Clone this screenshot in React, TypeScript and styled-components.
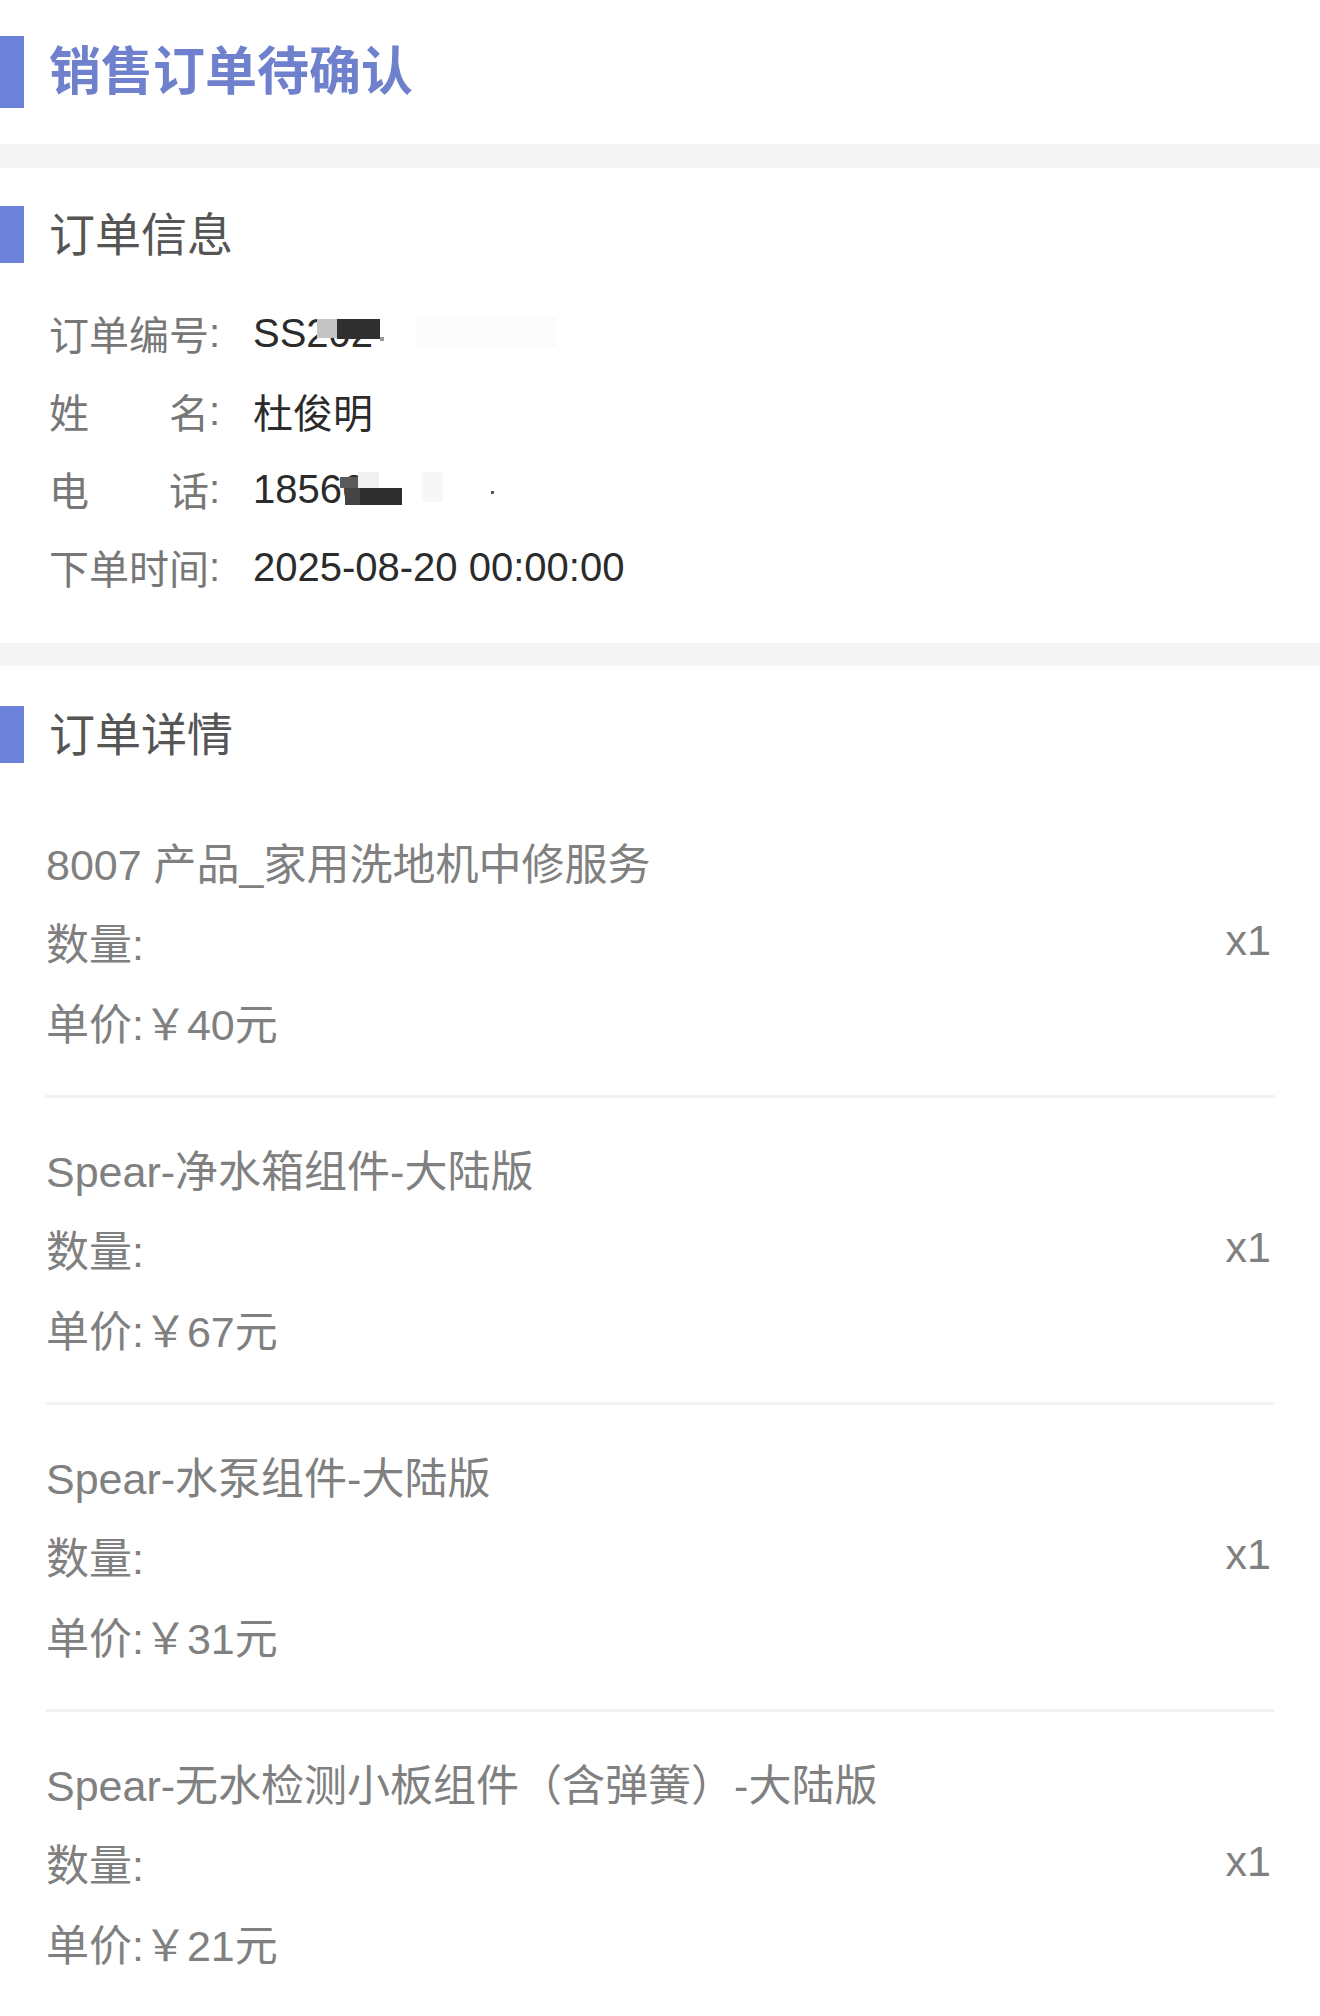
import React from "react";
import styled, { createGlobalStyle } from "styled-components";

const GlobalStyle = createGlobalStyle`
  html, body {
    margin: 0;
    padding: 0;
    background: #ffffff;
  }
  body {
    font-family: "Liberation Sans", Arial, "Noto Sans CJK SC", sans-serif;
  }
`;

interface OrderItem {
  name: string,
  qty: number,
  price: number
}

const items: OrderItem[] = [
  { name: "8007 产品_家用洗地机中修服务", qty: 1, price: 40 },
  { name: "Spear-净水箱组件-大陆版", qty: 1, price: 67 },
  { name: "Spear-水泵组件-大陆版", qty: 1, price: 31 },
  { name: "Spear-无水检测小板组件（含弹簧）-大陆版", qty: 1, price: 21 },
];

const App = () => {
  return (
    <Page>
      <GlobalStyle />
      <TopHeader>
        <Bar $height={72} />
        <PageTitle>销售订单待确认</PageTitle>
      </TopHeader>
      <Gap $height={24} />

      <InfoSection>
        <SectionHeader $mb={31}>
          <Bar $height={57} />
          <SectionTitle>订单信息</SectionTitle>
        </SectionHeader>
        <InfoRow>
          <Label>订单编号</Label><Colon>:</Colon>
          <Value>
            SS
            <Masked>
              202
              {/* privacy mosaic over the order number */}
              <MaskBlock $x={11} $y={8} $w={20} $h={19} $c="#c4c4c4" />
              <MaskBlock $x={31} $y={8} $w={43} $h={20} $c="#2f2f2f" />
              <MaskBlock $x={66} $y={28} $w={10} $h={14} $c="#ffffff" />
              <MaskBlock $x={74} $y={26} $w={4} $h={4} $c="#9a9a9a" />
              <MaskBlock $x={110} $y={6} $w={140} $h={30} $c="#fbfbfb" />
            </Masked>
          </Value>
        </InfoRow>
        <InfoRow>
          <Label>姓名</Label><Colon>:</Colon>
          <Value>杜俊明</Value>
        </InfoRow>
        <InfoRow>
          <Label>电话</Label><Colon>:</Colon>
          <Value>
            1856
            <Masked>
              6
              {/* privacy mosaic over the phone number */}
              <MaskBlock $x={-2} $y={10} $w={18} $h={11} $c="#5a5a5a" />
              <MaskBlock $x={16} $y={5} $w={21} $h={17} $c="#f0f0f0" />
              <MaskBlock $x={3} $y={21} $w={15} $h={17} $c="#444444" />
              <MaskBlock $x={18} $y={21} $w={42} $h={17} $c="#2e2e2e" />
              <MaskBlock $x={80} $y={5} $w={21} $h={30} $c="#f7f7f7" />
              <MaskBlock $x={149} $y={24} $w={3} $h={3} $c="#555555" />
            </Masked>
          </Value>
        </InfoRow>
        <InfoRow>
          <Label>下单时间</Label><Colon>:</Colon>
          <Value>2025-08-20 00:00:00</Value>
        </InfoRow>
      </InfoSection>
      <Gap $height={23} />

      <DetailSection>
        <SectionHeader $mb={28}>
          <Bar $height={57} />
          <SectionTitle>订单详情</SectionTitle>
        </SectionHeader>
        <ItemList>
          {items.map((item) => (
            <Item key={item.name}>
              <ItemLine>{item.name}</ItemLine>
              <QtyLine>
                <span>数量:</span>
                <Qty>x{item.qty}</Qty>
              </QtyLine>
              <ItemLine>单价:￥{item.price}元</ItemLine>
            </Item>
          ))}
        </ItemList>
      </DetailSection>
    </Page>
  );
};

const Page = styled.div`
  width: 1320px;
  min-height: 2016px;
  background: #ffffff;
  overflow: hidden;
`;

const TopHeader = styled.div`
  display: flex;
  align-items: center;
  height: 144px;
`;

const Bar = styled.div<{ $height: number }>`
  width: 24px;
  height: ${(p) => p.$height}px;
  background: #6c82d8;
  flex-shrink: 0;
`;

const PageTitle = styled.h1`
  margin: 0 0 0 25px;
  font-size: 52px;
  font-weight: 700;
  color: #6f80cc;
  line-height: 1;
`;

const Gap = styled.div<{ $height: number }>`
  height: ${(p) => p.$height}px;
  background: #f5f5f5;
`;

const InfoSection = styled.section`
  padding: 38px 0 37px;
`;

const DetailSection = styled.section`
  padding-top: 40px;
`;

const SectionHeader = styled.div<{ $mb: number }>`
  display: flex;
  align-items: center;
  margin-bottom: ${(p) => p.$mb}px;
`;

const SectionTitle = styled.h2`
  margin: 0 0 0 25px;
  font-size: 46px;
  font-weight: 400;
  color: #555555;
  line-height: 1;
`;

const InfoRow = styled.div`
  display: flex;
  align-items: center;
  height: 78px;
  padding-left: 49px;
  font-size: 40px;
`;

const Label = styled.span`
  width: 160px;
  color: #777777;
  text-align: justify;
  text-align-last: justify;
`;

const Colon = styled.span`
  color: #777777;
  width: 44px;
`;

const Value = styled.span`
  color: #2b2b2b;
  display: flex;
  align-items: center;
`;

const Masked = styled.span`
  position: relative;
  display: inline-block;
`;

const MaskBlock = styled.span<{ $x: number, $y: number, $w: number, $h: number, $c: string }>`
  position: absolute;
  left: ${(p) => p.$x}px;
  top: ${(p) => p.$y}px;
  width: ${(p) => p.$w}px;
  height: ${(p) => p.$h}px;
  background: ${(p) => p.$c};
`;

const ItemList = styled.div`
  padding: 0 45px 0 45px;
`;

const Item = styled.div`
  padding: 34px 0 30px;
  border-bottom: 3px solid #f2f2f2;
  color: #808080;
  font-size: 43px;
`;

const ItemLine = styled.div`
  height: 80px;
  line-height: 80px;
  white-space: nowrap;
  padding-left: 1px;
`;

const QtyLine = styled(ItemLine)`
  display: flex;
  justify-content: space-between;
`;

const Qty = styled.span`
  padding-right: 4px;
  position: relative;
  top: -5px;
`;

export default App;
